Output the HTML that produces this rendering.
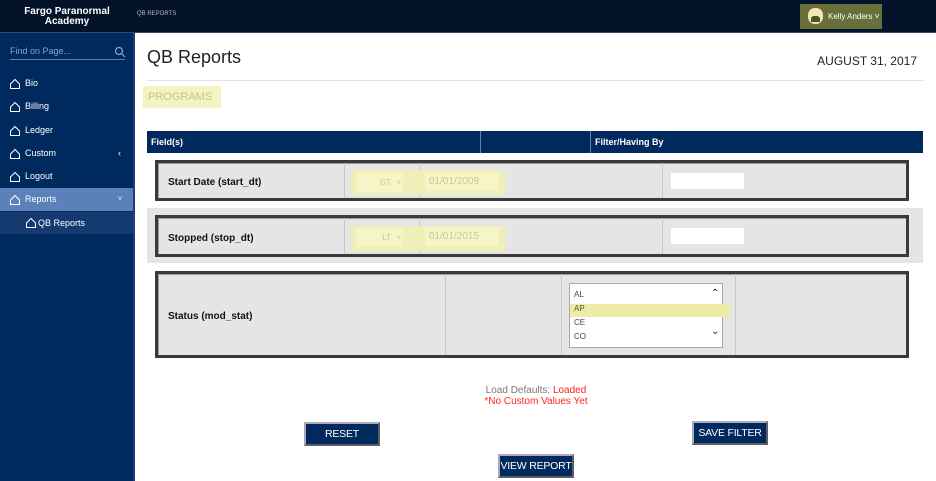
<!DOCTYPE html>
<html><head><meta charset="utf-8"><style>
*{margin:0;padding:0;box-sizing:border-box}
body{width:936px;height:481px;position:relative;overflow:hidden;background:#fff;font-family:"Liberation Sans",Arial,sans-serif}
.a{position:absolute}
.top{left:0;top:0;width:936px;height:33px;background:#021229;border-bottom:1px solid #3a4a66}
.side{left:0;top:33px;width:135px;height:448px;background:#002a5e;border-right:2px solid #1b3f78}
.nav{position:absolute;left:0;width:133px;height:23px;color:#fff;font-size:9px;line-height:23px;padding-left:25px}
.box{position:absolute;left:155px;width:754px;background:#e5e5e5;border:3px solid #3a3a3a;box-shadow:inset 1px 1px 0 #999}
.cell{position:absolute;top:0;bottom:0;border-left:1px solid #c8c8c8}
.lbl{position:absolute;left:10px;font-size:10px;font-weight:bold;color:#111}
.sel{position:absolute;background:#f5f5c8;color:#c8c89a;font-size:8px}
.btn{position:absolute;height:24px;background:#002a5e;color:#fff;font-size:10.5px;text-align:center;line-height:21px;border:2px outset #aab;white-space:nowrap;letter-spacing:-0.2px}
</style></head><body>
<div class="a top">
 <div class="a" style="left:16px;top:7px;width:102px;text-align:center;color:#fff;font-size:10px;font-weight:bold;line-height:10px">Fargo Paranormal<br>Academy</div>
 <div class="a" style="left:137px;top:11px;color:#bbb;font-size:6px">QB REPORTS</div>
 <div class="a" style="left:800px;top:4px;width:82px;height:25px;background:#67703a">
  <div class="a" style="left:8px;top:4px;width:15px;height:16px;border-radius:7px;background:#efe8b0"></div>
  <div class="a" style="left:11px;top:12px;width:9px;height:6px;background:#4d5225;border-radius:3px 3px 0 0"></div>
  <div class="a" style="left:28px;top:8px;color:#fff;font-size:8px">Kelly Anders ˅</div>
 </div>
</div>
<div class="a side">
 <div class="a" style="left:10px;top:13px;width:115px;height:14px;border-bottom:1px solid #5f7bab;color:#8ea3c8;font-size:9px">Find on Page...</div>
 <svg class="a" style="left:114px;top:13px" width="12" height="12"><circle cx="5" cy="5" r="3.5" fill="none" stroke="#8ea3c8" stroke-width="1.2"/><line x1="7.5" y1="7.5" x2="11" y2="11" stroke="#8ea3c8" stroke-width="1.2"/></svg>
</div>
<div class="nav" style="top:72px">Bio</div>
<div class="nav" style="top:95px">Billing</div>
<div class="nav" style="top:119px">Ledger</div>
<div class="nav" style="top:142px">Custom<span style="position:absolute;left:118px">‹</span></div>
<div class="nav" style="top:165px">Logout</div>
<div class="nav" style="top:188px;background:#5c80ba">Reports<span style="position:absolute;left:118px;font-size:7px">˅</span></div>
<div class="nav" style="top:212px;height:22px;line-height:22px;background:#153a70;padding-left:38px">QB Reports</div>
<svg class="a" style="left:9px;top:78px" width="12" height="140" fill="none" stroke="#fff" stroke-width="1">
 <path d="M1.5 6 L6 1.5 L10.5 6 V10.5 H1.5 Z"/><path transform="translate(0,23)" d="M1.5 6 L6 1.5 L10.5 6 V10.5 H1.5 Z"/><path transform="translate(0,47)" d="M1.5 6 L6 1.5 L10.5 6 V10.5 H1.5 Z"/><path transform="translate(0,70)" d="M1.5 6 L6 1.5 L10.5 6 V10.5 H1.5 Z"/><path transform="translate(0,93)" d="M1.5 6 L6 1.5 L10.5 6 V10.5 H1.5 Z"/><path transform="translate(0,116)" d="M1.5 6 L6 1.5 L10.5 6 V10.5 H1.5 Z"/>
</svg>
<svg class="a" style="left:25px;top:217px" width="12" height="12" fill="none" stroke="#fff" stroke-width="1"><path d="M1.5 6 L6 1.5 L10.5 6 V10.5 H1.5 Z"/></svg>

<div class="a" style="left:147px;top:47px;font-size:18px;color:#222">QB Reports</div>
<div class="a" style="left:780px;top:54px;width:137px;text-align:right;font-size:12px;color:#222">AUGUST 31, 2017</div>
<div class="a" style="left:147px;top:80px;width:776px;height:1px;background:#e0e0e0"></div>
<div class="a" style="left:143px;top:86px;width:78px;height:22px;background:#f4f4c2;color:#c4c48c;font-size:11px;line-height:22px;padding-left:5px">PROGRAMS</div>

<div class="a" style="left:147px;top:131px;width:776px;height:22px;background:#002a5e;color:#fff;font-size:9px;font-weight:bold;line-height:22px">
 <span style="position:absolute;left:4px">Field(s)</span>
 <span style="position:absolute;left:333px;top:0;bottom:0;border-left:1px solid #6a7fa3"></span>
 <span style="position:absolute;left:443px;top:0;bottom:0;border-left:1px solid #6a7fa3"></span>
 <span style="position:absolute;left:448px">Filter/Having By</span>
</div>

<div class="box" style="top:160px;height:41px">
 <div class="lbl" style="top:14px">Start Date (start_dt)</div>
 <div class="cell" style="left:186px"></div><div class="cell" style="left:261px"></div><div class="cell" style="left:504px"></div>
 <div class="a" style="left:193px;top:7px;width:154px;height:25px;background:#efefb8"></div>
 <div class="sel" style="left:198px;top:10px;width:47px;height:19px;line-height:19px;text-align:right;padding-right:12px">GT<span style="position:absolute;right:2px">˅</span></div>
 <div class="sel" style="left:267px;top:9px;width:74px;height:19px;line-height:19px;font-size:10px;padding-left:4px">01/01/2009</div>
 <div class="a" style="left:513px;top:10px;width:73px;height:16px;background:#fff"></div>
</div>
<div class="a" style="left:147px;top:208px;width:776px;height:55px;background:#e5e5e5"></div>
<div class="box" style="top:215px;height:42px">
 <div class="lbl" style="top:15px">Stopped (stop_dt)</div>
 <div class="cell" style="left:186px"></div><div class="cell" style="left:261px"></div><div class="cell" style="left:504px"></div>
 <div class="a" style="left:193px;top:8px;width:154px;height:25px;background:#efefb8"></div>
 <div class="sel" style="left:198px;top:10px;width:47px;height:19px;line-height:19px;text-align:right;padding-right:12px">LT<span style="position:absolute;right:2px">˅</span></div>
 <div class="sel" style="left:267px;top:9px;width:74px;height:19px;line-height:19px;font-size:10px;padding-left:4px">01/01/2015</div>
 <div class="a" style="left:513px;top:10px;width:73px;height:16px;background:#fff"></div>
</div>
<div class="box" style="top:271px;height:87px">
 <div class="lbl" style="top:37px">Status (mod_stat)</div>
 <div class="cell" style="left:287px"></div><div class="cell" style="left:403px"></div><div class="cell" style="left:577px"></div>
 <div class="a" style="left:411px;top:9px;width:154px;height:65px;background:#fff;border:1px solid #aaa"></div>
 <div class="a" style="left:412px;top:30px;width:160px;height:13px;background:#ececa8"></div>
 <div class="a" style="left:416px;top:14px;font-size:8px;color:#444;line-height:14px">AL<br><span style="color:#5a5a20">AP</span><br>CE<br>CO</div>
 <div class="a" style="left:553px;top:14px;font-size:10px;color:#222">⌃</div>
 <div class="a" style="left:553px;top:52px;font-size:10px;color:#222">⌄</div>
</div>

<div class="a" style="left:420px;top:385px;width:232px;text-align:center;font-size:10px;line-height:11px;color:#777">Load Defaults: <span style="color:#f22">Loaded</span><br><span style="color:#f22">*No Custom Values Yet</span></div>
<div class="btn" style="left:304px;top:422px;width:76px">RESET</div>
<div class="btn" style="left:692px;top:421px;width:76px">SAVE FILTER</div>
<div class="btn" style="left:498px;top:454px;width:76px">VIEW REPORT</div>
</body></html>
